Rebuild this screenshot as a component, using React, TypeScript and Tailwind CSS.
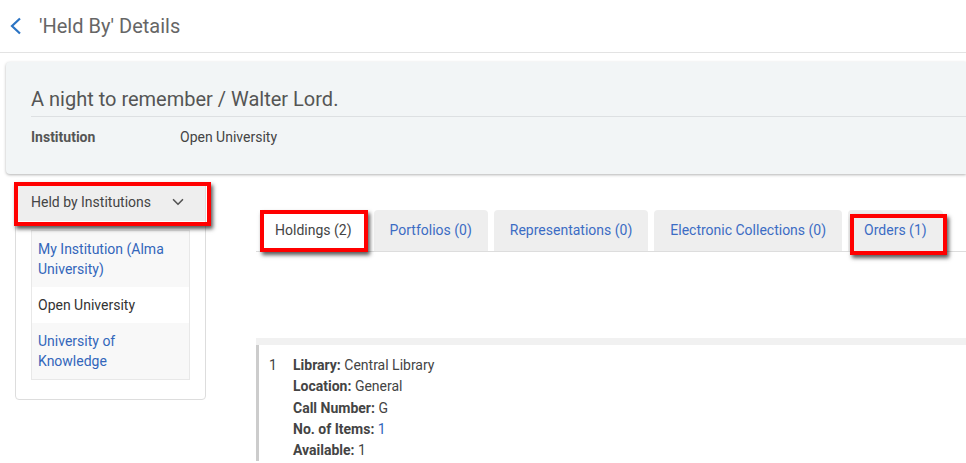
import { ChevronDown } from 'lucide-react';

const institutions = [
  { name: 'My Institution (Alma University)', link: true, shade: true },
  { name: 'Open University', link: false, shade: false },
  { name: 'University of Knowledge', link: true, shade: true },
];

const tabs = [
  { label: 'Holdings (2)', active: true },
  { label: 'Portfolios (0)', active: false },
  { label: 'Representations (0)', active: false },
  { label: 'Electronic Collections (0)', active: false },
  { label: 'Orders (1)', active: false },
];

const holding = [
  { label: 'Library:', value: 'Central Library', link: false },
  { label: 'Location:', value: 'General', link: false },
  { label: 'Call Number:', value: 'G', link: false },
  { label: 'No. of Items:', value: '1', link: true },
  { label: 'Available:', value: '1', link: false },
];

const redBox = 'pointer-events-none absolute border-4 border-[#ff0000] shadow-[2px_3px_4px_rgba(0,0,0,0.65)]';

const App = () => {
  return (
    <div className="w-[966px] h-[463px] overflow-hidden bg-white text-[#333] font-['Roboto',sans-serif]">
      <div className="h-[53px] flex items-center pl-[9px] border-b border-[#e3e3e3]">
        <svg width="14" height="18" viewBox="0 0 14 18" fill="none" className="mt-[-1px]">
          <polyline points="11,1.5 3,9 11,16.5" stroke="#2b74c4" strokeWidth="2.2" />
        </svg>
        <h1 className="ml-[16px] text-[20px] text-[#666] leading-none">'Held By' Details</h1>
      </div>

      <div className="pl-[6px] pt-[9px]">
        <div className="h-[112px] bg-[#f2f5f6] rounded-l-[4px] shadow-[0_1px_3px_rgba(0,0,0,0.3)] pl-[25px] pt-[25px]">
          <div className="text-[20px] text-[#555] leading-[24px] pb-[5px] border-b border-[#dde0e2]">
            A night to remember / Walter Lord.
          </div>
          <div className="flex text-[14px] mt-[10px]">
            <span className="w-[149px] font-bold text-[#555]">Institution</span>
            <span className="text-[#444]">Open University</span>
          </div>
        </div>
      </div>

      <div className="flex pl-[15px] pt-[8px]">
        <div className="relative w-[191px] self-start border border-[#ddd] rounded-b-[4px] pb-[19px]">
          <div className="h-[38px] bg-[#eeeeee] flex items-center justify-between pl-[15px] pr-[18px] text-[14px] text-[#444]">
            <span>Held by Institutions</span>
            <ChevronDown size={18} strokeWidth={2.2} color="#555" />
          </div>
          <div className={`${redBox} -left-[2px] -top-[1px] w-[197px] h-[44px]`} />
          <div className="mt-[9px] mx-[15px] border border-[#e8e8e8] text-[14px] leading-[20px]">
            {institutions.map((inst) => (
              <div
                key={inst.name}
                className={`px-[6px] py-[8px] ${inst.shade ? 'bg-[#f8f8f8]' : 'bg-white'} ${inst.link ? 'text-[#3366bb]' : 'text-[#333]'}`}
              >
                {inst.name}
              </div>
            ))}
          </div>
        </div>

        <div className="flex-1 ml-[50px]">
          <div className="relative flex gap-[6px] pl-[3px] pt-[28px] border-b border-[#ddd]">
            {tabs.map((tab) => (
              <div
                key={tab.label}
                className={`h-[41px] px-[16px] flex items-center rounded-t-[4px] text-[14px] whitespace-nowrap ${tab.active ? 'bg-white text-[#444]' : 'bg-[#eeeeee] text-[#3c6cc4]'}`}
              >
                {tab.label}
              </div>
            ))}
            <div className={`${redBox} left-[4px] top-[28px] w-[108px] h-[42px]`} />
            <div className={`${redBox} left-[594px] top-[32px] w-[97px] h-[41px]`} />
          </div>

          <div className="mt-[86px] h-[7px] bg-[#f1f1f1]" />
          <div className="border-l-[3px] border-[#cccccc] pl-[10px] pt-[10px] text-[14px] leading-[21.3px] text-[#444]">
            <div className="flex">
              <span className="w-[24px]">1</span>
              <div>
                {holding.map((row) => (
                  <div key={row.label}>
                    <span className="font-bold">{row.label}</span>{' '}
                    <span className={row.link ? 'text-[#3366bb]' : ''}>{row.value}</span>
                  </div>
                ))}
              </div>
            </div>
          </div>
        </div>
      </div>
    </div>
  );
};

export default App;
